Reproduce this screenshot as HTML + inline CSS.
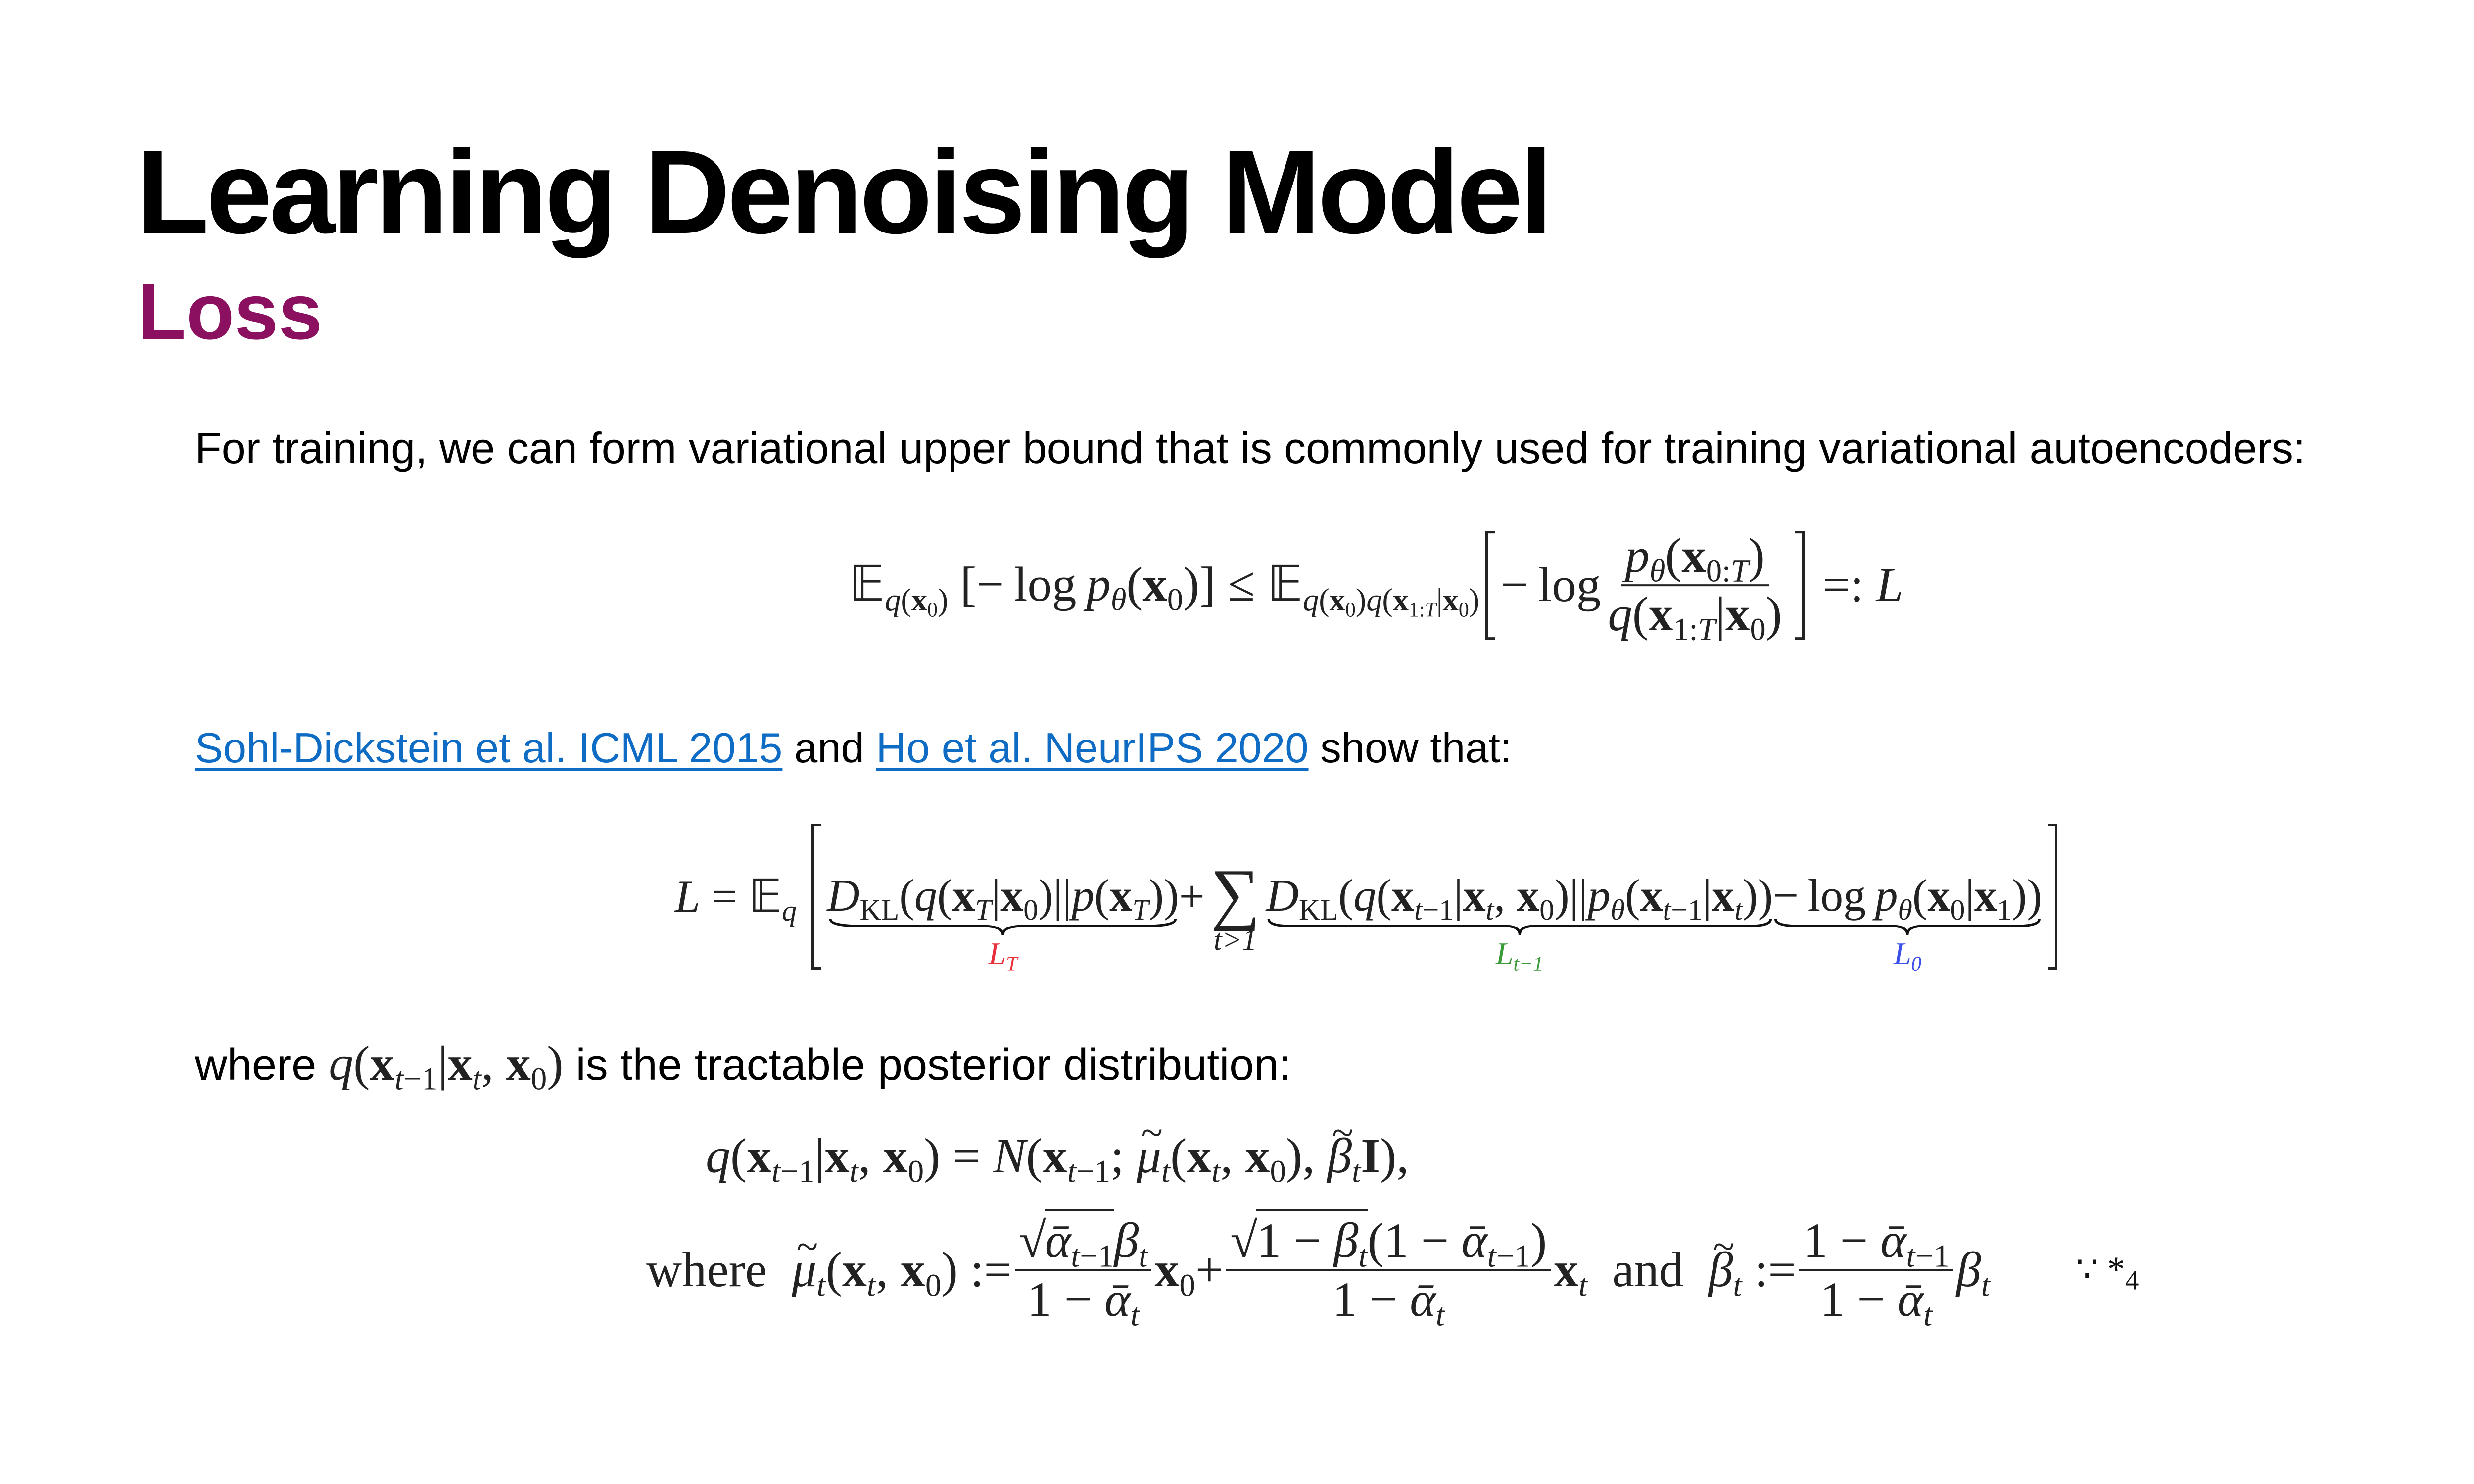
<!DOCTYPE html>
<html><head><meta charset="utf-8"><style>
html,body{margin:0;padding:0;background:#fff}
body{width:5334px;height:3000px;position:relative;overflow:hidden;font-family:"Liberation Sans",sans-serif;color:#000}
.abs{position:absolute;white-space:nowrap}
h1{position:absolute;left:276px;top:268px;margin:0;font-size:240px;font-weight:bold;letter-spacing:-6px;line-height:1}
h2{position:absolute;left:278px;top:550px;margin:0;font-size:160px;font-weight:bold;color:#8c1060;line-height:1}
.txt{font-size:88px;line-height:1}
a{color:#0f6cc4;text-decoration:underline;text-decoration-thickness:6px;text-underline-offset:12px}
.m{font-family:"Liberation Serif",serif;color:#222;font-size:99px;line-height:1}
.m i{font-style:italic}
.m b{font-weight:bold}
.m sub{font-size:65%;vertical-align:-0.3em;line-height:0}
.eq{position:absolute;display:flex;align-items:center;transform:translateY(-50%);white-space:nowrap}
.frac{display:inline-flex;flex-direction:column;align-items:center;vertical-align:middle;margin:0 6px}
.frac>span{padding:0 8px;line-height:1.15}
.frac>span:first-child{border-bottom:4px solid #222}
.bl,.br{display:inline-block;width:14px;border:5px solid #222;margin:0 12px}
.bl{border-right:none}.br{border-left:none}
.grp{display:inline-flex;flex-direction:column;align-items:center}
.grp svg{display:block}
.lab{font-family:"Liberation Serif",serif;font-style:italic;font-size:64px;line-height:1}
.sp{display:inline-block;width:24px}
.acc{position:relative;display:inline-block}
.acc:before{content:"~";position:absolute;left:0.12em;top:-0.45em;font-style:normal;font-size:0.8em}
.sq{border-top:4px solid #222;padding-top:4px;margin-left:-2px}
</style></head><body>
<h1>Learning Denoising Model</h1>
<h2>Loss</h2>

<div class="abs txt" style="left:394px;top:862px">For training, we can form variational upper bound that is commonly used for training variational autoencoders:</div>

<div class="eq m" style="left:1716px;top:1183px">
<span>𝔼<sub><i>q</i>(<b>x</b><sub>0</sub>)</sub></span><span class="sp"></span>
<span>[−&thinsp;log&thinsp;<i>p<sub>θ</sub></i>(<b>x</b><sub>0</sub>)]&nbsp;≤&nbsp;𝔼<sub><i>q</i>(<b>x</b><sub>0</sub>)<i>q</i>(<b>x</b><sub>1:<i>T</i></sub>|<b>x</b><sub>0</sub>)</sub></span>
<span class="bl" style="height:210px"></span>
<span>−&thinsp;log</span>
<span class="frac"><span><i>p<sub>θ</sub></i>(<b>x</b><sub>0:<i>T</i></sub>)</span><span><i>q</i>(<b>x</b><sub>1:<i>T</i></sub>|<b>x</b><sub>0</sub>)</span></span>
<span class="br" style="height:210px"></span>
<span>&nbsp;=: <i>L</i></span>
</div>

<div class="abs txt" style="left:394px;top:1470px;font-size:85px"><a>Sohl-Dickstein et al. ICML 2015</a> and <a>Ho et al. NeurIPS 2020</a> show that:</div>

<div class="eq m" style="left:1364px;top:1812px;font-size:92px">
<span><i>L</i> = 𝔼<sub><i>q</i></sub></span>
<span class="bl" style="height:285px;margin-left:30px"></span>
<span class="grp" style="margin-top:100px"><span><i>D</i><sub>KL</sub>(<i>q</i>(<b>x</b><sub><i>T</i></sub>|<b>x</b><sub>0</sub>)||<i>p</i>(<b>x</b><sub><i>T</i></sub>))</span>
<svg width="100%" height="40" viewBox="0 0 100 40" preserveAspectRatio="none"><path d="M1 2 Q1 16 10 16 L44 16 Q50 16 50 34 Q50 16 56 16 L90 16 Q99 16 99 2" fill="none" stroke="#111" stroke-width="5" vector-effect="non-scaling-stroke"/></svg>
<span class="lab" style="color:#e8303a">L<sub>T</sub></span></span>
<span>+</span>
<span class="grp" style="margin:50px 12px 0"><span style="font-size:140px;line-height:0.9">∑</span><span class="lab" style="font-size:60px"><i>t</i>&gt;1</span></span>
<span class="grp" style="margin-top:100px"><span><i>D</i><sub>KL</sub>(<i>q</i>(<b>x</b><sub><i>t</i>−1</sub>|<b>x</b><sub><i>t</i></sub>, <b>x</b><sub>0</sub>)||<i>p<sub>θ</sub></i>(<b>x</b><sub><i>t</i>−1</sub>|<b>x</b><sub><i>t</i></sub>))</span>
<svg width="100%" height="40" viewBox="0 0 100 40" preserveAspectRatio="none"><path d="M0.5 2 Q0.5 16 5 16 L47 16 Q50 16 50 34 Q50 16 53 16 L95 16 Q99.5 16 99.5 2" fill="none" stroke="#111" stroke-width="5" vector-effect="non-scaling-stroke"/></svg>
<span class="lab" style="color:#3a9a3a">L<sub>t−1</sub></span></span>
<span class="grp" style="margin-top:100px"><span>−&thinsp;log&thinsp;<i>p<sub>θ</sub></i>(<b>x</b><sub>0</sub>|<b>x</b><sub>1</sub>))</span>
<svg width="100%" height="40" viewBox="0 0 100 40" preserveAspectRatio="none"><path d="M1 2 Q1 16 10 16 L44 16 Q50 16 50 34 Q50 16 56 16 L90 16 Q99 16 99 2" fill="none" stroke="#111" stroke-width="5" vector-effect="non-scaling-stroke"/></svg>
<span class="lab" style="color:#3a4ee8">L<sub>0</sub></span></span>
<span class="br" style="height:285px"></span>
</div>

<div class="abs txt" style="left:394px;top:2100px;font-size:90px">where <span class="m" style="font-size:100px"><i>q</i>(<b>x</b><sub><i>t</i>−1</sub>|<b>x</b><sub><i>t</i></sub>, <b>x</b><sub>0</sub>)</span> is the tractable posterior distribution:</div>

<div class="eq m" style="left:1426px;top:2337px;font-size:100px">
<span><i>q</i>(<b>x</b><sub><i>t</i>−1</sub>|<b>x</b><sub><i>t</i></sub>, <b>x</b><sub>0</sub>) = <i>N</i>(<b>x</b><sub><i>t</i>−1</sub>; <i class="acc">μ</i><sub><i>t</i></sub>(<b>x</b><sub><i>t</i></sub>, <b>x</b><sub>0</sub>), <i class="acc">β</i><sub><i>t</i></sub><b>I</b>),</span>
</div>

<div class="eq m" style="left:1306px;top:2567px;font-size:100px">
<span>where&nbsp; <i class="acc">μ</i><sub><i>t</i></sub>(<b>x</b><sub><i>t</i></sub>, <b>x</b><sub>0</sub>) :=</span>
<span class="frac"><span>√<span class="sq"><i>ᾱ</i><sub><i>t</i>−1</sub></span><i>β</i><sub><i>t</i></sub></span><span>1 − <i>ᾱ</i><sub><i>t</i></sub></span></span>
<span><b>x</b><sub>0</sub>+</span>
<span class="frac"><span>√<span class="sq">1 − <i>β</i><sub><i>t</i></sub></span>(1 − <i>ᾱ</i><sub><i>t</i>−1</sub>)</span><span>1 − <i>ᾱ</i><sub><i>t</i></sub></span></span>
<span><b>x</b><sub><i>t</i></sub>&nbsp; and&nbsp; <i class="acc">β</i><sub><i>t</i></sub> :=</span>
<span class="frac"><span>1 − <i>ᾱ</i><sub><i>t</i>−1</sub></span><span>1 − <i>ᾱ</i><sub><i>t</i></sub></span></span>
<span><i>β</i><sub><i>t</i></sub></span>
</div>
<div class="abs m" style="left:4195px;top:2530px;font-size:72px;color:#111">∵ *<sub style="font-size:55px">4</sub></div>
</body></html>
